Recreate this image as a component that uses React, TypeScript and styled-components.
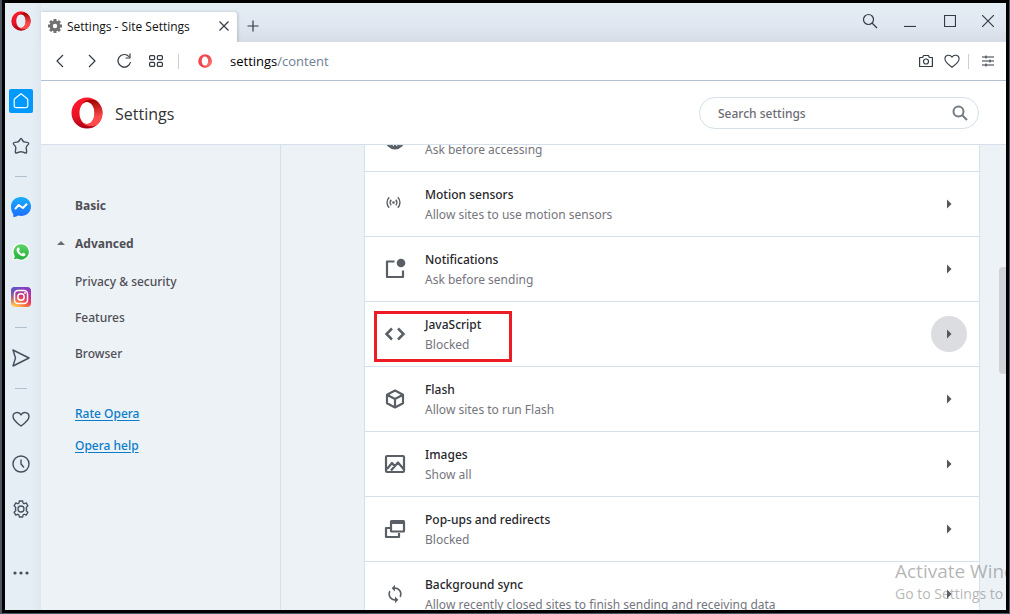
import React, { ReactNode } from "react";
import styled, { createGlobalStyle, css } from "styled-components";

const Global = createGlobalStyle`
  *, *::before, *::after { box-sizing: border-box; }
  html, body { margin: 0; padding: 0; height: 100%; }
  #root { height: 100%; }
  body { font-family: "Noto Sans", "Open Sans", sans-serif; font-size: 12px; overflow: hidden; }
  button, input { font: inherit; color: inherit; }
`;

const Desktop = styled.div`
  height: 100vh;
  padding: 0 1px 1px 2px;
  background: #4b5563;
`;

const BrowserWindow = styled.div`
  position: relative;
  height: 100%;
  display: flex;
  border: 3px solid #000;
  background: #edf2f7;
  overflow: hidden;
`;

const plainButton = css`
  display: flex;
  align-items: center;
  justify-content: center;
  padding: 0;
  border: 0;
  background: none;
  cursor: pointer;
`;

const Sidebar = styled.nav`
  flex: none;
  width: 36px;
  display: flex;
  flex-direction: column;
  align-items: center;
  padding: 4px 4px 25px 0;
  background: linear-gradient(to right, #e5edf5 75%, #dfe7f0);
`;

const SideButton = styled.button<{ $active?: boolean; $gap?: number }>`
  ${plainButton}
  flex: none;
  width: 24px;
  height: 24px;
  margin-top: ${(p) => p.$gap ?? 21}px;
  border-radius: 2px;
  color: ${(p) => (p.$active ? "#fff" : "#434f5a")};
  background: ${(p) => (p.$active ? "#0099ff" : "none")};
`;

const SideRule = styled.hr<{ $gap: number }>`
  flex: none;
  width: 12px;
  height: 1px;
  margin: ${(p) => p.$gap}px 0 0;
  border: 0;
  background: #b1c1cf;
`;

const Spacer = styled.div`
  flex: 1;
`;

const Main = styled.div`
  flex: 1;
  min-width: 0;
  display: flex;
  flex-direction: column;
`;

const TabStrip = styled.div`
  flex: none;
  height: 39px;
  display: flex;
  align-items: flex-end;
  background: linear-gradient(#e5edf5, #e0e7f0 60%, #d5dce5);
`;

const Tab = styled.div`
  width: 196px;
  height: 30px;
  display: flex;
  align-items: center;
  gap: 5px;
  padding: 0 6px 2px 7px;
  border-radius: 0 3px 0 0;
  background: #fff;
  box-shadow: 1px 0 3px rgba(60, 80, 100, 0.25);
  color: #111;
`;

const TabTitle = styled.span`
  flex: 1;
  font-family: "Open Sans", sans-serif;
  white-space: nowrap;
`;

const IconButton = styled.button<{ $width?: number }>`
  ${plainButton}
  flex: none;
  width: ${(p) => p.$width ?? 32}px;
  height: 30px;
  color: #333b44;
`;

const NewTabButton = styled(IconButton)`
  padding-bottom: 2px;
`;

const WindowControls = styled.div`
  display: flex;
  align-items: center;
  height: 39px;
  margin-left: auto;
  padding-bottom: 3px;
`;

const AddressBar = styled.div`
  flex: none;
  height: 39px;
  display: flex;
  align-items: center;
  padding: 0 2px 0 3px;
  border-bottom: 1px solid #b1c1cf;
  background: #fff;
`;

const Divider = styled.span<{ $margin: number }>`
  width: 1px;
  height: 15px;
  margin: 0 ${(p) => p.$margin}px;
  background: #cbd0d6;
`;

const Address = styled.span`
  flex: 1;
  margin-left: 5px;
  font-family: "Open Sans", sans-serif;
  font-size: 13px;
  color: #6f8092;
  b { font-weight: 400; color: #000; }
`;

const Header = styled.header`
  flex: none;
  height: 64px;
  display: flex;
  align-items: center;
  padding: 0 27px 0 30px;
  border-bottom: 1px solid #d5e0ea;
  background: #fff;
`;

const Heading = styled.h1`
  flex: 1;
  margin: 0 0 0 12px;
  font-family: "Open Sans", sans-serif;
  font-size: 16px;
  font-weight: 400;
  line-height: 24px;
  padding-top: 2px;
  color: #333;
`;

const SearchBox = styled.label`
  width: 280px;
  height: 32px;
  display: flex;
  align-items: center;
  padding: 0 10px 0 18px;
  border: 1px solid #d5e0ea;
  border-radius: 16px;
  color: #757b82;
`;

const SearchInput = styled.input`
  flex: 1;
  min-width: 0;
  padding: 2px 0 0;
  border: 0;
  outline: 0;
  background: none;
  font-size: 12px;
  &::placeholder { color: #6b6b73; opacity: 1; font-weight: 500; }
`;

const Body = styled.div`
  flex: 1;
  min-height: 0;
  display: flex;
  overflow: hidden;
`;

const Menu = styled.nav`
  flex: none;
  width: 240px;
  display: flex;
  flex-direction: column;
  align-items: flex-start;
  padding: 50px 0 0 14px;
  border-right: 1px solid #d5e0ea;
  color: #4f4f55;
`;

const MenuItem = styled.a<{ $bold?: boolean; $gap?: number }>`
  display: flex;
  align-items: center;
  height: 20px;
  margin-top: ${(p) => p.$gap ?? 16}px;
  font-weight: ${(p) => (p.$bold ? 700 : 500)};
  color: inherit;
  text-decoration: none;
`;

const MenuMarker = styled.span`
  width: 20px;
  display: flex;
`;

const MenuLink = styled.a<{ $gap: number }>`
  height: 20px;
  line-height: 20px;
  margin: ${(p) => p.$gap}px 0 0 20px;
  color: #0a7cc9;
  font-weight: 500;
  text-decoration: underline;
  text-underline-offset: 2px;
`;

const ScrollArea = styled.main`
  flex: 1;
  min-width: 0;
  padding: 0 26px 0 83px;
  overflow: hidden;
`;

const SettingsList = styled.ul`
  list-style: none;
  margin: -38px 0 0;
  padding: 0;
  border: solid #d5e0ea;
  border-width: 0 1px;
  background: #fff;
`;

const SettingRow = styled.li`
  height: 65px;
  display: flex;
  align-items: center;
  padding: 0 12px 0 18px;
  border-bottom: 1px solid #d5e0ea;
`;

const RowIcon = styled.span`
  flex: none;
  width: 24px;
  display: flex;
  justify-content: center;
  color: #5a5f66;
`;

const RowText = styled.div`
  flex: 1;
  min-width: 0;
  margin-left: 18px;
  padding-top: 2px;
  line-height: 20px;
  white-space: nowrap;
`;

const RowTitle = styled.div`
  min-height: 20px;
  font-weight: 500;
  color: #26262b;
`;

const RowState = styled.div`
  color: #75757d;
`;

const RowButton = styled.button<{ $hover?: boolean }>`
  ${plainButton}
  flex: none;
  width: 36px;
  height: 36px;
  border-radius: 50%;
  color: #55555c;
  background: ${(p) => (p.$hover ? "#dcdde0" : "none")};
`;

const ScrollThumb = styled.div`
  position: absolute;
  right: 0;
  top: 264px;
  width: 7px;
  height: 107px;
  border-radius: 4px 0 0 4px;
  background: #d0d4d8;
`;

const Marker = styled.div`
  position: absolute;
  left: 369px;
  top: 308px;
  width: 138px;
  height: 51px;
  border: 3px solid #ed1c24;
  pointer-events: none;
`;

const Watermark = styled.div`
  position: absolute;
  left: 890px;
  bottom: 6px;
  white-space: nowrap;
  font-family: "Open Sans", sans-serif;
  font-size: 14px;
  line-height: 20px;
  color: rgba(120, 120, 120, 0.55);
  pointer-events: none;
`;

const WatermarkTitle = styled.div`
  font-size: 19px;
  line-height: 25px;
`;

type IconProps = { size?: number; stroke?: number; box?: number; fill?: boolean; children: ReactNode };
const Icon = ({ size = 18, stroke = 1.2, box = 18, fill, children }: IconProps) => (
  <svg
    width={size}
    height={size}
    viewBox={`0 0 ${box} ${box}`}
    fill={fill ? "currentColor" : "none"}
    stroke={fill ? "none" : "currentColor"}
    strokeWidth={stroke}
    strokeLinejoin="round"
    aria-hidden="true"
  >
    {children}
  </svg>
);

const OperaLogo = ({ size, id, flat }: { size: number; id: string; flat?: boolean }) => (
  <svg width={size} height={size} viewBox="0 0 32 32" aria-hidden="true">
    <defs>
      <linearGradient id={`${id}a`} x1="0.3" y1="0" x2="0.4" y2="1">
        <stop offset="0" stopColor={flat ? "#fa4b50" : "#ff1b2d"} />
        <stop offset="0.6" stopColor={flat ? "#f5464b" : "#e81226"} />
        <stop offset="1" stopColor={flat ? "#e8383f" : "#a70014"} />
      </linearGradient>
      <linearGradient id={`${id}b`} x1="0.4" y1="0" x2="0.5" y2="1">
        <stop offset="0" stopColor={flat ? "#e0484c" : "#9c0000"} />
        <stop offset="0.7" stopColor={flat ? "#ff6b6b" : "#ff4b4b"} />
      </linearGradient>
    </defs>
    <path fill={`url(#${id}a)`} fillRule="evenodd" d="M16 0.5a15.5 15.5 0 1 0 0 31 15.5 15.5 0 1 0 0-31zM16 5c4.500 0 7.500 5 7.500 11s-3 11-7.500 11-7.500-5-7.500-11 3-11 7.500-11z" />
    <path fill={`url(#${id}b)`} d="M11 6.800C14 3 20 1.500 25.500 3.800a15.500 15.500 0 0 1 0 24.400C20 30.500 14 29 11 25.200c1.300 1.200 3 1.800 5 1.800 4.500 0 7.500-5 7.500-11S20.500 5 16 5c-2 0-3.700.6-5 1.800z" />
  </svg>
);

const Heart = () => <path d="M9 16C5.500 13.500 1 10.300 1 6.500 1 2.200 7 1 9 4.800 11 1 17 2.200 17 6.500c0 3.800-4.500 7-8 9.500z" />;

/* Eight teeth around a thick ring. */
const TabGear = () => (
  <svg width="14" height="14" viewBox="0 0 14 14" fill="none" stroke="#717171" aria-hidden="true">
    <circle cx="7" cy="7" r="3.800" strokeWidth="3.200" />
    <path strokeWidth="3" d="M7 0v3M7 11v3M0 7h3M11 7h3M2.050 2.050l2 2M9.950 9.950l2 2M2.050 11.950l2-2M9.950 4.050l2-2" />
  </svg>
);

const SideGear = () => (
  <Icon stroke={1.3}>
    <path d="M7.300 1h3.400l.3 1.700c.1.700.8 1.200 1.500.9l1.700-.7 1.700 2.900-1.300 1.100c-.6.500-.6 1.300 0 1.800v.6c-.6.500-.6 1.300 0 1.800l1.300 1.100-1.700 2.900-1.700-.7c-.7-.3-1.400.2-1.500.9l-.3 1.700H7.300L7 15.300c-.1-.7-.8-1.200-1.500-.9l-1.700.7-1.700-2.900 1.300-1.100c.6-.5.6-1.300 0-1.800v-.6c.6-.5.6-1.300 0-1.800L2.100 5.800l1.700-2.900 1.700.7c.7.300 1.400-.2 1.500-.9z" />
    <circle cx="9" cy="9" r="3" />
  </Icon>
);

const Messenger = () => (
  <svg width="22" height="22" viewBox="0 0 22 22" aria-hidden="true">
    <defs>
      <linearGradient id="msg" x1="0" y1="0" x2="0" y2="1">
        <stop offset="0" stopColor="#19aefb" />
        <stop offset="1" stopColor="#1b6cff" />
      </linearGradient>
    </defs>
    <path fill="url(#msg)" d="M11 1c5.700 0 10 4.100 10 9.500S16.700 20 11 20c-1 0-2-.1-2.900-.4-1.300.6-2.600 1.600-4.100 1.500-.6 0-.7-.5-.7-2.800C2 16.500 1 14 1 10.500 1 5.100 5.300 1 11 1z" />
    <path fill="none" stroke="#fff" strokeWidth="2" strokeLinejoin="round" d="M5 13.200l3.700-4.200 4.200 3 4.100-4.200" />
  </svg>
);

const WhatsApp = () => (
  <svg width="20" height="20" viewBox="0 0 20 20" aria-hidden="true">
    <defs>
      <linearGradient id="wa" x1="0" y1="0" x2="0" y2="1">
        <stop offset="0" stopColor="#5fd467" />
        <stop offset="1" stopColor="#22b03c" />
      </linearGradient>
    </defs>
    <path fill="#fafcfb" d="M10.200.8a9 9 0 1 1-4.300 17L1 19.200l1.400-4.800A9 9 0 0 1 10.200.8z" />
    <path fill="url(#wa)" d="M10.200 2.200a7.700 7.700 0 1 1-4 14.300L3 17.300l.9-3.100a7.700 7.700 0 0 1 6.300-12z" />
    <path fill="#fff" d="M7.200 5.500c.4-.1.800 0 1 .5l.6 1.500c.1.500-.5 1-.8 1.400.7 1.400 1.700 2.300 3.200 2.900.4-.4.800-1.200 1.300-1l1.700.9c.4.200.4.600.2 1.200-.5 1-1.600 1.500-2.700 1.300-3-.6-5.500-3-6.100-5.600-.2-1.300.5-2.800 1.600-3.100z" />
  </svg>
);

const Instagram = () => (
  <svg width="20" height="20" viewBox="0 0 20 20" aria-hidden="true">
    <defs>
      <linearGradient id="ig" x1="0.8" y1="0" x2="0.2" y2="1">
        <stop offset="0" stopColor="#8a3ac8" />
        <stop offset="0.45" stopColor="#e02f6b" />
        <stop offset="0.75" stopColor="#fb7a3c" />
        <stop offset="1" stopColor="#ffd45f" />
      </linearGradient>
      <linearGradient id="igc" x1="0" y1="0" x2="0.5" y2="0.5">
        <stop offset="0" stopColor="#3f5fe0" />
        <stop offset="1" stopColor="#3f5fe0" stopOpacity="0" />
      </linearGradient>
    </defs>
    <rect width="20" height="20" rx="4" fill="url(#ig)" />
    <rect width="20" height="20" rx="4" fill="url(#igc)" />
    <g fill="none" stroke="#fff" strokeWidth="1.500">
      <rect x="3.500" y="3.500" width="13" height="13" rx="3.500" />
      <circle cx="10" cy="10" r="3.200" />
    </g>
    <circle cx="14" cy="6" r="0.900" fill="#fff" />
  </svg>
);

type Setting = { title: string; state: string; icon: ReactNode; hover?: boolean };

const settings: Setting[] = [
  {
    title: "",
    state: "Ask before accessing",
    icon: <Icon size={24} box={24} stroke={2}><circle cx="12" cy="13" r="8.500" /><path d="M7 17l4 4h2l4-4M12 17v4" /></Icon>,
  },
  {
    title: "Motion sensors",
    state: "Allow sites to use motion sensors",
    icon: (
      <Icon size={20} box={20} stroke={1.4}>
        <circle cx="8.500" cy="8.500" r="1.300" fill="currentColor" stroke="none" />
        <path d="M6.200 5.800c-1.300 1.600-1.300 3.800 0 5.400M10.800 5.800c1.300 1.600 1.300 3.800 0 5.400M4.200 3.300c-2.900 3-2.900 7.400 0 10.400M12.800 3.300c2.900 3 2.900 7.400 0 10.400" />
      </Icon>
    ),
  },
  {
    title: "Notifications",
    state: "Ask before sending",
    icon: (
      <Icon size={24} box={24} stroke={2.2}>
        <path d="M11.500 4.500H4V20h16v-6.500" />
        <circle cx="18" cy="6" r="4.300" fill="currentColor" stroke="none" />
      </Icon>
    ),
  },
  {
    title: "JavaScript",
    state: "Blocked",
    hover: true,
    icon: <Icon size={24} box={24} stroke={2.5}><path d="M9 6.500L3.500 12 9 17.500M15 6.500l5.500 5.500-5.500 5.500" strokeLinejoin="miter" /></Icon>,
  },
  {
    title: "Flash",
    state: "Allow sites to run Flash",
    icon: <Icon size={24} box={24} stroke={2.2}><path d="M12 3.500l8 4.200v8.600l-8 4.200-8-4.200V7.700zM4 7.700l8 4.300 8-4.300M12 12v8.500" /></Icon>,
  },
  {
    title: "Images",
    state: "Show all",
    icon: (
      <Icon size={24} box={24} stroke={2.2}>
        <rect x="3" y="4" width="18" height="16" rx="1" />
        <path d="M4 17l5-6 3 3.500M8 18.500l7-8 6 7" />
      </Icon>
    ),
  },
  {
    title: "Pop-ups and redirects",
    state: "Blocked",
    icon: (
      <Icon size={24} box={24} stroke={2.2}>
        <path d="M7 11H3v9h13v-4" />
        <rect x="8" y="4" width="13" height="10.500" rx="0.500" />
        <path d="M8 5.500h13" strokeWidth="3" />
      </Icon>
    ),
  },
  {
    title: "Background sync",
    state: "Allow recently closed sites to finish sending and receiving data",
    icon: (
      <Icon size={20} box={24} fill>
        <path d="M12 4V1L8 5l4 4V6c3.310 0 6 2.690 6 6 0 1.010-.25 1.970-.7 2.800l1.460 1.460A7.930 7.930 0 0 0 20 12c0-4.420-3.580-8-8-8zm0 14c-3.310 0-6-2.690-6-6 0-1.010.25-1.970.7-2.800L5.240 7.740A7.930 7.930 0 0 0 4 12c0 4.420 3.580 8 8 8v3l4-4-4-4v3z" />
      </Icon>
    ),
  },
];

const Arrow = () => (
  <svg width="6" height="10" viewBox="0 0 6 10" fill="currentColor" aria-hidden="true">
    <path d="M1 0.500L5.500 5 1 9.500z" />
  </svg>
);

export default function App() {
  return (
    <>
      <Global />
      <Desktop>
        <BrowserWindow>
          <Sidebar aria-label="Sidebar">
            <SideButton $gap={2} aria-label="Opera menu"><OperaLogo size={20} id="o1" /></SideButton>
            <SideButton $gap={56} $active aria-label="Speed dial">
              <Icon><path d="M9 1.700l6 4.800c.5.400.8 1 .8 1.500v5.500c0 1.300-.8 2.200-2 2.200H4.200c-1.200 0-2-.9-2-2.200V8c0-.5.3-1.100.8-1.500z" /></Icon>
            </SideButton>
            <SideButton aria-label="Bookmarks">
              <Icon stroke={1.4}><path d="M9 1.500c.5 0 .8.600 1.300 1.600.6 1.200 1.200 1.800 2.600 2 1.900.3 3.500.5 3.800 1.100.3.700-1 1.900-1.900 2.900-.8.900-.8 1.700-.5 3 .4 1.800.7 3.300 0 3.800-.7.400-2.200-.3-3.300-.8-1.300-.5-2.700-.5-4 0-1.100.5-2.600 1.200-3.300.8-.7-.5-.4-2 0-3.800.3-1.300.3-2.100-.5-3-.9-1-2.200-2.200-1.900-2.900.3-.6 1.900-.8 3.800-1.100 1.400-.2 2-.8 2.600-2 .5-1 .8-1.600 1.300-1.600z" /></Icon>
            </SideButton>
            <SideRule $gap={18} />
            <SideButton $gap={18} aria-label="Messenger"><Messenger /></SideButton>
            <SideButton aria-label="WhatsApp"><WhatsApp /></SideButton>
            <SideButton aria-label="Instagram"><Instagram /></SideButton>
            <SideRule $gap={18} />
            <SideButton $gap={18} aria-label="My Flow">
              <Icon stroke={1.4}><path d="M1 1l16 8-16 8 2.500-8z" /></Icon>
            </SideButton>
            <SideRule $gap={18} />
            <SideButton $gap={18} aria-label="Personal news"><Icon stroke={1.4}><Heart /></Icon></SideButton>
            <SideButton aria-label="History">
              <Icon stroke={1.4}><circle cx="9" cy="9" r="8" /><path d="M9 4.500V9l3 3.500" /></Icon>
            </SideButton>
            <SideButton aria-label="Settings"><SideGear /></SideButton>
            <Spacer />
            <SideButton aria-label="More">
              <Icon fill><circle cx="3" cy="9" r="1.600" /><circle cx="9" cy="9" r="1.600" /><circle cx="15" cy="9" r="1.600" /></Icon>
            </SideButton>
          </Sidebar>

          <Main>
            <TabStrip>
              <Tab>
                <TabGear />
                <TabTitle>Settings - Site Settings</TabTitle>
                <IconButton $width={14} aria-label="Close tab">
                  <Icon size={12} box={12}><path d="M1.500 1.500l9 9M10.500 1.500l-9 9" /></Icon>
                </IconButton>
              </Tab>
              <NewTabButton aria-label="New tab">
                <Icon size={12} box={12}><path d="M6 0.500v11M0.500 6h11" /></Icon>
              </NewTabButton>
              <WindowControls>
                <IconButton $width={40} aria-label="Search tabs">
                  <Icon size={16} box={16}><circle cx="6.500" cy="6.500" r="5" /><path d="M10 10l5 5" /></Icon>
                </IconButton>
                <IconButton $width={40} aria-label="Minimize"><Icon size={12} box={12}><path d="M0 11.500h12" /></Icon></IconButton>
                <IconButton $width={40} aria-label="Maximize"><Icon size={12} box={12} stroke={1.2}><rect x="0.500" y="0.500" width="11" height="11" /></Icon></IconButton>
                <IconButton $width={36} aria-label="Close"><Icon size={12} box={12}><path d="M0 0l12 12M12 0L0 12" /></Icon></IconButton>
              </WindowControls>
            </TabStrip>

            <AddressBar>
              <IconButton aria-label="Back"><Icon size={16} box={16}><path d="M11 2L5 8l6 6" /></Icon></IconButton>
              <IconButton aria-label="Forward"><Icon size={16} box={16}><path d="M5 2l6 6-6 6" /></Icon></IconButton>
              <IconButton aria-label="Reload">
                <Icon size={16} box={16}><path d="M13 3.600A6.300 6.300 0 1 0 14.500 9M14 0.500v4.500H9.500" /></Icon>
              </IconButton>
              <IconButton aria-label="Tab menu">
                <Icon size={16} box={16}>
                  <rect x="1.600" y="2.600" width="5" height="4" rx="1" /><rect x="9.400" y="2.600" width="5" height="4" rx="1" />
                  <rect x="1.600" y="9.400" width="5" height="4" rx="1" /><rect x="9.400" y="9.400" width="5" height="4" rx="1" />
                </Icon>
              </IconButton>
              <Divider $margin={6} />
              <IconButton aria-label="Site information" $width={40}><OperaLogo size={14} id="o2" flat /></IconButton>
              <Address><b>settings</b>/content</Address>
              <IconButton $width={26} aria-label="Snapshot">
                <Icon size={16} box={16}><path d="M1.600 4.500h3l1-2h4.800l1 2h3v9H1.600z" /><circle cx="8" cy="8.500" r="2.500" /></Icon>
              </IconButton>
              <IconButton $width={26} aria-label="Add to bookmarks"><Icon size={16}><Heart /></Icon></IconButton>
              <Divider $margin={3} />
              <IconButton aria-label="Easy setup">
                <Icon size={14} box={14} stroke={1.1}><path d="M1 3h12M1 7h12M1 11h12M5 1.500v3M9 5.500v3M5 9.500v3" /></Icon>
              </IconButton>
            </AddressBar>

            <Header>
              <OperaLogo size={32} id="o3" />
              <Heading>Settings</Heading>
              <SearchBox>
                <SearchInput type="text" placeholder="Search settings" aria-label="Search settings" />
                <Icon size={16} box={16} stroke={2}><circle cx="6.500" cy="6.500" r="5" /><path d="M10 10l5 5" /></Icon>
              </SearchBox>
            </Header>

            <Body>
              <Menu aria-label="Settings sections">
                <MenuItem href="#basic" $bold $gap={0}><MenuMarker />Basic</MenuItem>
                <MenuItem href="#advanced" $bold $gap={18}>
                  <MenuMarker>
                    <svg width="12" height="6" viewBox="0 0 12 6" aria-hidden="true"><path d="M2 5l4-4 4 4z" fill="#6b6b73" /></svg>
                  </MenuMarker>
                  Advanced
                </MenuItem>
                <MenuItem href="#privacy" $gap={18}><MenuMarker />Privacy &amp; security</MenuItem>
                <MenuItem href="#features"><MenuMarker />Features</MenuItem>
                <MenuItem href="#browser"><MenuMarker />Browser</MenuItem>
                <MenuLink href="#rate" $gap={41}>Rate Opera</MenuLink>
                <MenuLink href="#help" $gap={12}>Opera help</MenuLink>
              </Menu>
              <ScrollArea>
                <SettingsList>
                  {settings.map((s) => (
                    <SettingRow key={s.state + s.title}>
                      <RowIcon>{s.icon}</RowIcon>
                      <RowText>
                        <RowTitle>{s.title}</RowTitle>
                        <RowState>{s.state}</RowState>
                      </RowText>
                      <RowButton $hover={s.hover} aria-label={s.title || s.state}><Arrow /></RowButton>
                    </SettingRow>
                  ))}
                </SettingsList>
              </ScrollArea>
            </Body>
          </Main>

          <ScrollThumb />
          <Marker />
          <Watermark>
            <WatermarkTitle>Activate Windows</WatermarkTitle>
            Go to Settings to activate Windows.
          </Watermark>
        </BrowserWindow>
      </Desktop>
    </>
  );
}
